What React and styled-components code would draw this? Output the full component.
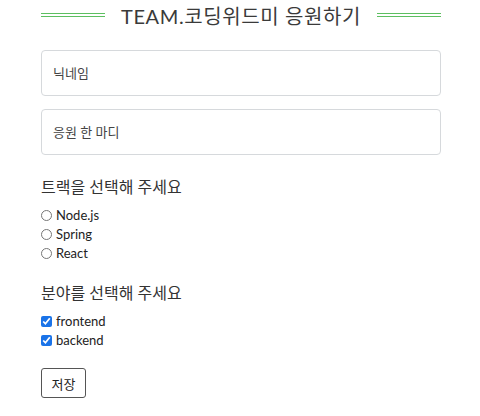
import React, { useState } from 'react'
import styled, { createGlobalStyle } from 'styled-components'

const GlobalStyle = createGlobalStyle`
  body {
    margin: 0;
    background: #ffffff;
    font-family: Lato, "Noto Sans CJK KR", sans-serif;
    color: #222;
  }
`

const Container = styled.form`
  width: 400px;
  margin: 0 39px 0 41px;
  padding-top: 1px;
  display: flex;
  flex-direction: column;
`

const TitleRow = styled.div`
  display: flex;
  align-items: center;
  gap: 16px;
  height: 28px;
  margin-bottom: 21px;
`

const Line = styled.span`
  flex: 1;
  height: 2px;
  border-top: 1px solid #5cbf60;
  border-bottom: 1px solid #5cbf60;
`

const Title = styled.h1`
  margin: 0;
  font-size: 20px;
  font-weight: 400;
  letter-spacing: 0.6px;
  color: #3a3a3a;
`

const InputGroup = styled.div`
  display: flex;
  flex-direction: column;
  gap: 13px;
`

const Input = styled.input`
  box-sizing: border-box;
  width: 400px;
  height: 46px;
  padding: 0 11px;
  border: 1px solid #d6d9dc;
  border-radius: 4px;
  font-family: Lato, "Noto Sans CJK KR", sans-serif;
  font-size: 13px;
  outline: none;
  &::placeholder {
    color: #444;
  }
`

const SectionTitle = styled.h2`
  margin: 19px 0 9px;
  font-size: 16px;
  font-weight: 400;
  color: #333;
`

const OptionList = styled.div`
  display: flex;
  flex-direction: column;
  gap: 3px;
`

const Option = styled.label`
  display: flex;
  align-items: center;
  gap: 4px;
  height: 16px;
  font-size: 13px;
  color: #222;
  input {
    margin: 0;
    width: 11px;
    height: 11px;
    accent-color: #1a73e8;
  }
`

const SaveButton = styled.button`
  align-self: flex-start;
  margin-top: 20px;
  width: 45px;
  height: 30px;
  background: #fff;
  border: 1px solid #555;
  border-radius: 3px;
  font-family: Lato, "Noto Sans CJK KR", sans-serif;
  font-size: 13px;
  color: #222;
`

const tracks = ['Node.js', 'Spring', 'React']
const fields = ['frontend', 'backend']

export default function App() {
  const [track, setTrack] = useState('')
  const [checked, setChecked] = useState({ frontend: true, backend: true })

  return (
    <>
      <GlobalStyle />
      <Container onSubmit={(e) => e.preventDefault()}>
        <TitleRow>
          <Line />
          <Title>TEAM.코딩위드미 응원하기</Title>
          <Line />
        </TitleRow>
        <InputGroup>
          <Input placeholder="닉네임" />
          <Input placeholder="응원 한 마디" />
        </InputGroup>

        <SectionTitle>트랙을 선택해 주세요</SectionTitle>
        <OptionList>
          {tracks.map((t) => (
            <Option key={t}>
              <input
                type="radio"
                name="track"
                checked={track === t}
                onChange={() => setTrack(t)}
              />
              {t}
            </Option>
          ))}
        </OptionList>

        <SectionTitle>분야를 선택해 주세요</SectionTitle>
        <OptionList>
          {fields.map((f) => (
            <Option key={f}>
              <input
                type="checkbox"
                checked={checked[f]}
                onChange={() => setChecked({ ...checked, [f]: !checked[f] })}
              />
              {f}
            </Option>
          ))}
        </OptionList>

        <SaveButton type="submit">저장</SaveButton>
      </Container>
    </>
  )
}
